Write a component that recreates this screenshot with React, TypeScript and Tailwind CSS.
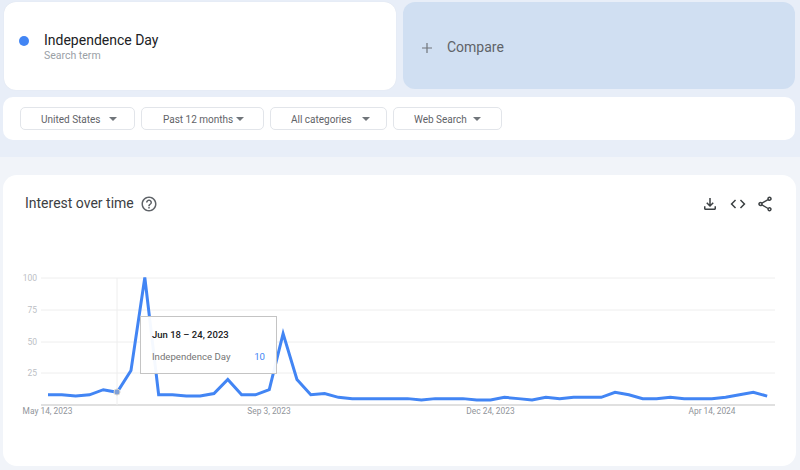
const values = [
	8, 8, 7, 8, 12, 10, 27, 100, 8, 8, 7, 7, 9, 20, 8, 8, 12, 56, 20, 8, 9, 6, 5, 5, 5, 5, 5, 4, 5, 5, 5, 4, 4, 6, 5,
	4, 6, 5, 6, 6, 6, 10, 8, 5, 5, 6, 5, 5, 5, 6, 8, 10, 7,
];

const points = values.map((v, i) => `${48 + i * 13.83},${405 - v * 1.275}`).join(" ");

const filters = [
	{ label: "United States", w: "w-[115px]", p: "pl-[20px] pr-[17px]" },
	{ label: "Past 12 months", w: "w-[123px]", p: "pl-[21px] pr-[19px]" },
	{ label: "All categories", w: "w-[117px]", p: "pl-[20px] pr-[16px]" },
	{ label: "Web Search", w: "w-[109px]", p: "pl-[20px] pr-[20px]" },
];

function Chart() {
	return (
		<svg width="793" height="234" viewBox="0 0 793 234" className="block">
			<g transform="translate(-3 -232)">
				{[278, 310, 342, 373].map((y) => (
					<line key={y} x1="41" x2="775" y1={y} y2={y} stroke="#eeeeee" strokeWidth="1" />
				))}
				<line x1="41" x2="775" y1="405" y2="405" stroke="#d6d6d6" strokeWidth="1.5" />
				<line x1="117" x2="117" y1="278" y2="405" stroke="#eeeeee" strokeWidth="1" />
				{[
					["100", 281],
					["75", 313],
					["50", 345],
					["25", 376],
				].map(([t, y]) => (
					<text key={t} x="37" y={y} textAnchor="end" fontSize="8.5" fill="#bcc0c5" fontFamily="Roboto, sans-serif">
						{t}
					</text>
				))}
				{[
					["May 14, 2023", 47.5],
					["Sep 3, 2023", 269],
					["Dec 24, 2023", 490.5],
					["Apr 14, 2024", 712],
				].map(([t, x]) => (
					<text key={t} x={x} y="414" textAnchor="middle" fontSize="8.4" fill="#90949a" fontFamily="Roboto, sans-serif">
						{t}
					</text>
				))}
				<polyline points={points} fill="none" stroke="#4285f4" strokeWidth="3" strokeLinejoin="miter" />
				<circle cx="117" cy="392" r="3" fill="#7f9fd6" stroke="#d8d4cc" strokeWidth="1" />
			</g>
		</svg>
	);
}

export default function App() {
	return (
		<div className="h-[470px] w-[800px] overflow-hidden bg-[#e8eef8] font-['Roboto',sans-serif]">
			<div className="flex gap-[7px] pl-1 pt-[2px]">
				<div className="flex h-[88px] w-[392px] items-start gap-[15px] rounded-[12px] bg-white pl-[15px] pt-[29px] shadow-[0_0_1px_#d5dbe6]">
					<div className="mt-[5px] h-[10px] w-[10px] rounded-full bg-[#4285f4]"></div>
					<div>
						<div className="text-[14px] leading-[18px] text-[#202124]">Independence Day</div>
						<div className="text-[10.5px] leading-[13px] text-[#9aa0a6]">Search term</div>
					</div>
				</div>
				<div className="flex h-[87px] w-[392px] items-center gap-[13px] rounded-[12px] bg-[#d0dff2] pl-[17px] pt-[4px] text-[#5f6368]">
					<svg width="14" height="14" viewBox="0 0 14 14">
						<path d="M7 2v10M2 7h10" stroke="#70757a" strokeWidth="1.2" />
					</svg>
					<span className="text-[14px]">Compare</span>
				</div>
			</div>
			<div className="ml-[3px] mt-[7px] flex h-[43px] w-[792px] items-center gap-[6px] rounded-[10px] bg-white pl-[17px]">
				{filters.map((f) => (
					<div
						key={f.label}
						className={`flex h-[23px] items-center justify-between whitespace-nowrap rounded-[5px] border border-[#e2e5ea] pt-px text-[10px] text-[#5f6368] ${f.w} ${f.p}`}
					>
						<span>{f.label}</span>
						<svg width="8" height="4" viewBox="0 0 8 4">
							<path d="M0 0h8L4 4z" fill="#70757a" />
						</svg>
					</div>
				))}
			</div>
			<div className="mt-[17px] h-[313px] bg-[#f1f4f9] pl-[3px] pt-[18px]">
				<div className="relative h-[291px] w-[793px] rounded-[14px] bg-white">
					<div className="flex h-[57px] items-center justify-between pl-[22px] pr-[22px]">
						<div className="flex items-center gap-[6px]">
							<span className="text-[14px] text-[#3c4043]">Interest over time</span>
							<svg width="18" height="18" viewBox="0 0 24 24" fill="#5f6368">
								<path d="M11 18h2v-2h-2v2zm1-16C6.48 2 2 6.48 2 12s4.48 10 10 10 10-4.48 10-10S17.52 2 12 2zm0 18c-4.41 0-8-3.59-8-8s3.59-8 8-8 8 3.59 8 8-3.59 8-8 8zm0-14c-2.21 0-4 1.79-4 4h2c0-1.1.9-2 2-2s2 .9 2 2c0 2-3 1.75-3 5h2c0-2.25 3-2.5 3-5 0-2.21-1.79-4-4-4z" />
							</svg>
						</div>
						<div className="flex items-center gap-[9.5px] text-[#3c4043]">
							<svg width="18" height="18" viewBox="0 0 24 24" fill="currentColor">
								<path d="M18 15v3H6v-3H4v3c0 1.1.9 2 2 2h12c1.1 0 2-.9 2-2v-3h-2zm-1-4l-1.41-1.41L13 12.17V4h-2v8.17L8.41 9.59 7 11l5 5 5-5z" />
							</svg>
							<svg width="18" height="18" viewBox="0 0 24 24" fill="currentColor">
								<path d="M9.4 16.6L4.8 12l4.6-4.6L8 6l-6 6 6 6 1.4-1.4zm5.2 0l4.6-4.6-4.6-4.6L16 6l6 6-6 6-1.4-1.4z" />
							</svg>
							<svg width="18" height="18" viewBox="0 0 24 24" fill="currentColor">
								<path d="M18 16.08c-.76 0-1.44.3-1.96.77L8.91 12.7c.05-.23.09-.46.09-.7s-.04-.47-.09-.7l7.05-4.11c.54.5 1.25.81 2.04.81 1.66 0 3-1.34 3-3s-1.34-3-3-3-3 1.34-3 3c0 .24.04.47.09.7L8.04 9.81C7.5 9.31 6.79 9 6 9c-1.66 0-3 1.34-3 3s1.34 3 3 3c.79 0 1.5-.31 2.04-.81l7.12 4.16c-.05.21-.08.43-.08.65 0 1.61 1.31 2.92 2.92 2.92s2.92-1.31 2.92-2.92-1.31-2.92-2.92-2.92zM18 4c.55 0 1 .45 1 1s-.45 1-1 1-1-.45-1-1 .45-1 1-1zM6 13c-.55 0-1-.45-1-1s.45-1 1-1 1 .45 1 1-.45 1-1 1zm12 7.02c-.55 0-1-.45-1-1s.45-1 1-1 1 .45 1 1-.45 1-1 1z" />
							</svg>
						</div>
					</div>
					<Chart />
					<div className="absolute left-[137px] top-[141px] h-[58px] w-[137px] border border-[#c4c4c4] bg-white/95 pl-[11px] pt-[11px]">
						<div className="text-[9.5px] font-medium leading-[13px] text-[#202124]">Jun 18 – 24, 2023</div>
						<div className="mt-[9px] flex items-center justify-between pr-[11px] text-[9.6px] leading-[13px]">
							<span className="text-[#757575]">Independence Day</span>
							<span className="text-[#4285f4]">10</span>
						</div>
					</div>
				</div>
			</div>
		</div>
	);
}
